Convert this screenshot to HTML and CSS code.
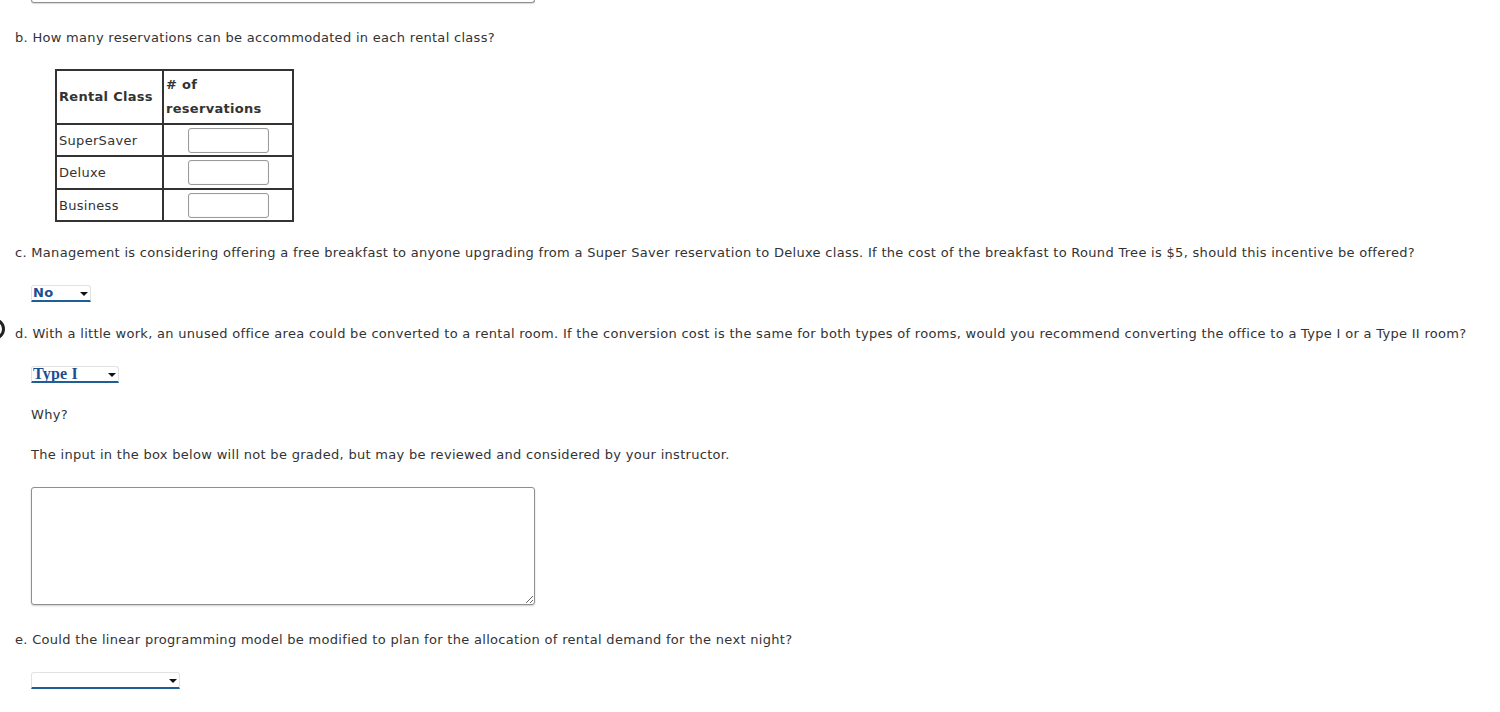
FILE: index.html
```html
<!DOCTYPE html>
<html>

<head>
    <title>Round Tree - rental classes</title>
    <link rel="stylesheet" href="styles.css">
</head>

<body>
    <div class="prev-tail"></div>

    <div id="content">

        <p class="question">b. How many reservations can be accommodated in each rental class?</p>

        <table class="res-table">
            <thead>
                <tr>
                    <th class="col-class">Rental Class</th>
                    <th class="col-count"># of reservations</th>
                </tr>
            </thead>
            <tbody>
                <tr>
                    <td>SuperSaver</td>
                    <td class="cell-input"><input type="text"></td>
                </tr>
                <tr>
                    <td class="row-mid">Deluxe</td>
                    <td class="cell-input"><input type="text"></td>
                </tr>
                <tr>
                    <td>Business</td>
                    <td class="cell-input"><input type="text"></td>
                </tr>
            </tbody>
        </table>

        <p class="question">c. Management is considering offering a free breakfast to anyone upgrading from a Super Saver reservation to Deluxe class. If the cost of the breakfast to Round Tree is $5, should this incentive be offered?</p>

        <div class="answer">
            <span class="select-wrap">
                <select class="drop drop-no">
                    <option>No</option>
                    <option>Yes</option>
                </select>
            </span>
        </div>

        <p class="question q-d"><span class="side-mark"></span>d. With a little work, an unused office area could be converted to a rental room. If the conversion cost is the same for both types of rooms, would you recommend converting the office to a Type I or a Type II room?</p>

        <div class="answer">
            <span class="select-wrap">
                <select class="drop drop-type">
                    <option>Type I</option>
                    <option>Type II</option>
                </select>
            </span>
        </div>

        <p class="note">Why?</p>

        <p class="note">The input in the box below will not be graded, but may be reviewed and considered by your instructor.</p>

        <div class="answer">
            <textarea class="why-box"></textarea>
        </div>

        <p class="question q-e">e. Could the linear programming model be modified to plan for the allocation of rental demand for the next night?</p>

        <div class="answer">
            <span class="select-wrap">
                <select class="drop drop-e">
                    <option></option>
                    <option>Yes</option>
                    <option>No</option>
                </select>
            </span>
        </div>

    </div>
</body>

</html>
```

FILE: styles.css
```css
body {
    background-color: #ffffff;
    font-family: "DejaVu Sans", Verdana, sans-serif;
    font-size: 13px;
    letter-spacing: 0.3px;
    color: #333333;
    margin: 0;
    padding: 0;
}

/* bottom of the textarea from the part above */
.prev-tail {
    width: 502px;
    height: 2px;
    margin-left: 31px;
    border: solid #8f8f8f;
    border-width: 0 1px 1px 1px;
    border-radius: 0 0 3px 3px;
    box-shadow: 0 1px 1px rgba(0, 0, 0, 0.15);
}

#content {
    display: flex;
    flex-direction: column;
    align-items: flex-start;
    gap: 24px;
    padding: 27px 0 0 15px;
}

p {
    margin: 0;
    line-height: 16px;
}

.q-d {
    position: relative;
}

.q-e {
    margin-top: 3px;
}

.note {
    margin-left: 16px;
}

.answer {
    margin-left: 16px;
    display: flex;
}

/* little round thing cut off at the left edge */
.side-mark {
    position: absolute;
    left: -32px;
    top: -8px;
    width: 16px;
    height: 16px;
    border: 3px solid #222222;
    border-radius: 50%;
}

/* TABLE */

.res-table {
    border-collapse: collapse;
    margin-left: 40px;
    margin-top: -1px;
    margin-bottom: -1px;
    border: 2px solid #333333;
}

.res-table th,
.res-table td {
    border: 2px solid #333333;
    padding: 1px 2px;
    text-align: left;
}

.res-table th {
    font-weight: bold;
    line-height: 24px;
    padding: 2px 2px;
}

.col-class {
    width: 101px;
}

.col-count {
    width: 124px;
}

.res-table td {
    height: 28px;
}

.res-table td.row-mid {
    height: 29px;
}

.cell-input {
    text-align: center !important;
}

.cell-input input {
    width: 81px;
    height: 25px;
    box-sizing: border-box;
    border: 1px solid #9a9a9a;
    border-radius: 3px;
    box-shadow: inset 0 0 1px rgba(0, 0, 0, 0.2);
    display: block;
    margin: 0 auto;
}

/* dropdowns */

.select-wrap {
    position: relative;
    display: inline-block;
}

.select-wrap::after {
    content: "";
    position: absolute;
    right: 3px;
    top: 7px;
    border-left: 4px solid transparent;
    border-right: 4px solid transparent;
    border-top: 4px solid #111111;
    pointer-events: none;
}

.drop {
    appearance: none;
    -webkit-appearance: none;
    background-color: #ffffff;
    border: 1px solid #e2e2e2;
    border-bottom: 2px solid #1f5f95;
    border-radius: 3px 3px 0 0;
    font-family: "DejaVu Sans", Verdana, sans-serif;
    font-size: 13px;
    letter-spacing: 0.3px;
    font-weight: bold;
    color: #1b4f90;
    height: 17px;
    padding: 0 0 0 1px;
    margin: 0;
    box-sizing: border-box;
    line-height: 14px;
    display: block;
}

.drop-no {
    width: 60px;
}

.drop-type {
    width: 88px;
    font-family: "Liberation Serif", "Times New Roman", serif;
    font-size: 16px;
    letter-spacing: 0.2px;
}

.drop-e {
    width: 149px;
}

.why-box {
    width: 504px;
    height: 118px;
    box-sizing: border-box;
    border: 1px solid #8f8f8f;
    border-radius: 3px;
    box-shadow: 0 1px 2px rgba(0, 0, 0, 0.2);
    margin: 0;
    display: block;
    resize: both;
}
```
